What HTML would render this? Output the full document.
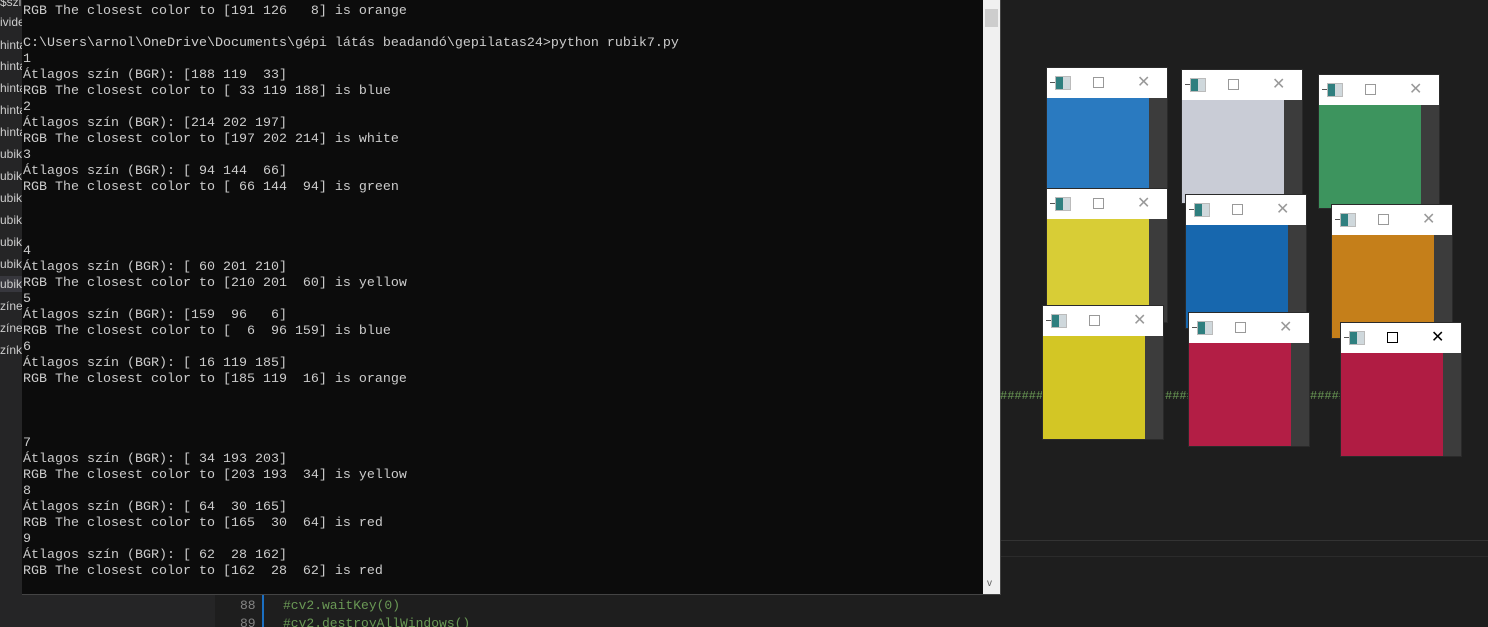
<!DOCTYPE html>
<html style="overflow:hidden;height:627px"><head><meta charset="utf-8"><style>
body{margin:0;width:1488px;height:627px;overflow:hidden;background:#1e1e1e;position:relative;font-family:"Liberation Mono",monospace}
.side{position:absolute;left:0;top:0;width:22px;height:594px;background:#252526;overflow:hidden}
.side div{position:absolute;left:0;font:12px "Liberation Sans",sans-serif;color:#ccc;white-space:nowrap;line-height:16px}
.con{position:absolute;left:22px;top:0;width:978px;height:594px;background:#0c0c0c;border-right:1px solid #444;border-bottom:1px solid #444}
pre{margin:0;position:absolute;left:1px;top:4px;font:13.33px/16px "Liberation Mono",monospace;color:#cccccc}
.sb{position:absolute;left:961px;top:0;width:17px;height:594px;background:#f0f0f0}
.th{position:absolute;left:2px;top:9px;width:13px;height:18px;background:#cdcdcd}
.w{position:absolute;width:120px;height:133px;background:#3c3c3c;outline:1px solid #2a2a2a}
.t{position:absolute;left:0;top:0;width:120px;height:30px;background:#fff}
.img{position:absolute;left:0;top:30px;width:102px;height:103px}
.ic{position:absolute;left:8px;top:8px;width:14px;height:12px;background:linear-gradient(90deg,#2f7f7f 0 50%,#cfd8dc 50%);border:1px solid #bbb}
.ic:before{content:"";position:absolute;left:-6px;top:5px;width:5px;height:1px;background:#555}
.mx{position:absolute;left:46px;top:9px;width:9px;height:9px;border:1px solid #999}
.x{position:absolute;left:90px;top:4px;font:16px "Liberation Sans",sans-serif;color:#999}
.g{position:absolute;top:389px;height:14px;font:12px "Liberation Mono",monospace;color:#6a9955;overflow:hidden;white-space:nowrap}
</style></head><body>
<div class="side">
<div style="top:-6px">$szi</div><div style="top:14px">ivide</div><div style="top:37px">hinta</div><div style="top:58px">hinta</div><div style="top:80px">hinta</div><div style="top:102px">hinta</div><div style="top:124px">hinta</div><div style="top:146px">ubik</div><div style="top:168px">ubik</div><div style="top:190px">ubik</div><div style="top:212px">ubik</div><div style="top:234px">ubik</div><div style="top:256px">ubik</div><div style="top:276px;background:#37373d;width:22px">ubik</div><div style="top:298px">zíne</div><div style="top:320px">zíne</div><div style="top:342px">zínk</div>
</div>
<div style="position:absolute;left:1000px;top:540px;width:488px;height:1px;background:#333"></div>
<div style="position:absolute;left:1000px;top:556px;width:488px;height:1px;background:#2b2b2b"></div>
<div style="position:absolute;left:0;top:594px;width:215px;height:33px;background:#252526"></div>
<div style="position:absolute;left:240px;top:597px;font:13px/18px 'Liberation Mono',monospace;color:#858585">88<br>89</div>
<div style="position:absolute;left:262px;top:594px;width:2px;height:33px;background:#1b6fc2"></div>
<div style="position:absolute;left:283px;top:597px;font:13px/18px 'Liberation Mono',monospace;color:#6a9955">#cv2.waitKey(0)<br>#cv2.destroyAllWindows()</div>
<div class="con"><pre>RGB The closest color to [191 126   8] is orange

C:\Users\arnol\OneDrive\Documents\gépi látás beadandó\gepilatas24>python rubik7.py
1
Átlagos szín (BGR): [188 119  33]
RGB The closest color to [ 33 119 188] is blue
2
Átlagos szín (BGR): [214 202 197]
RGB The closest color to [197 202 214] is white
3
Átlagos szín (BGR): [ 94 144  66]
RGB The closest color to [ 66 144  94] is green



4
Átlagos szín (BGR): [ 60 201 210]
RGB The closest color to [210 201  60] is yellow
5
Átlagos szín (BGR): [159  96   6]
RGB The closest color to [  6  96 159] is blue
6
Átlagos szín (BGR): [ 16 119 185]
RGB The closest color to [185 119  16] is orange



7
Átlagos szín (BGR): [ 34 193 203]
RGB The closest color to [203 193  34] is yellow
8
Átlagos szín (BGR): [ 64  30 165]
RGB The closest color to [165  30  64] is red
9
Átlagos szín (BGR): [ 62  28 162]
RGB The closest color to [162  28  62] is red</pre>
<div class="sb"><div class="th"></div><div style="position:absolute;left:4px;top:578px;font:10px sans-serif;color:#606060">v</div></div></div>
<div class="g" style="left:1000px;width:43px">################</div>
<div class="g" style="left:1165px;width:24px">################</div>
<div class="g" style="left:1310px;width:31px">################</div>

<div class="w" style="left:1047px;top:68px"><div class="t"><div class="ic"></div><div class="mx"></div><div class="x">✕</div></div><div class="img" style="background:#2a7ac0"></div></div>
<div class="w" style="left:1182px;top:70px"><div class="t"><div class="ic"></div><div class="mx"></div><div class="x">✕</div></div><div class="img" style="background:#c9ccd6"></div></div>
<div class="w" style="left:1319px;top:75px"><div class="t"><div class="ic"></div><div class="mx"></div><div class="x">✕</div></div><div class="img" style="background:#3d945e"></div></div>
<div class="w" style="left:1047px;top:189px"><div class="t"><div class="ic"></div><div class="mx"></div><div class="x">✕</div></div><div class="img" style="background:#d8cd36"></div></div>
<div class="w" style="left:1186px;top:195px"><div class="t"><div class="ic"></div><div class="mx"></div><div class="x">✕</div></div><div class="img" style="background:#1767ae"></div></div>
<div class="w" style="left:1332px;top:205px"><div class="t"><div class="ic"></div><div class="mx"></div><div class="x">✕</div></div><div class="img" style="background:#c57f1a"></div></div>
<div class="w" style="left:1043px;top:306px"><div class="t"><div class="ic"></div><div class="mx"></div><div class="x">✕</div></div><div class="img" style="background:#d3c625"></div></div>
<div class="w" style="left:1189px;top:313px"><div class="t"><div class="ic"></div><div class="mx"></div><div class="x">✕</div></div><div class="img" style="background:#b31e45"></div></div>
<div class="w" style="left:1341px;top:323px"><div class="t"><div class="ic"></div><div class="mx" style="border-color:#000"></div><div class="x" style="color:#000">✕</div></div><div class="img" style="background:#b01c43"></div></div>
</body></html>
